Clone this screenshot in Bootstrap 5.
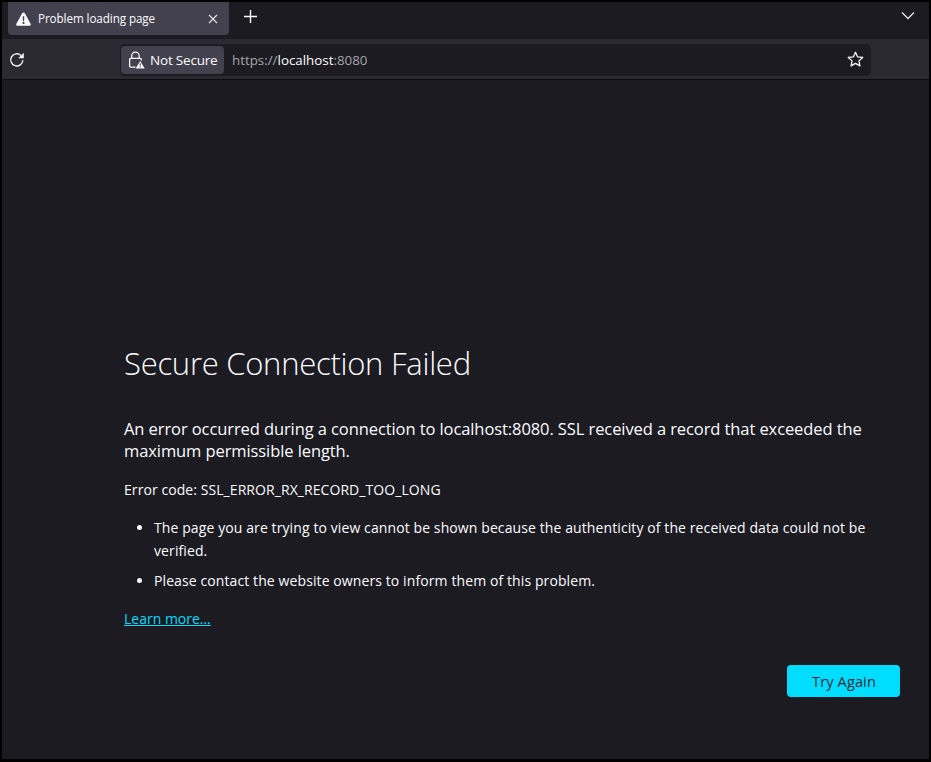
<!DOCTYPE html>
<html lang="en">
<head>
<meta charset="utf-8">
<title>Problem loading page</title>
<link rel="stylesheet" href="https://cdn.jsdelivr.net/npm/bootstrap@5.3.0/dist/css/bootstrap.min.css">
<style>
html,body{height:100%;margin:0;background:#1c1b22}
body{font-family:"Open Sans","Noto Sans",sans-serif;color:#fbfbfe}
.shell{height:762px;border:2px solid #000;border-bottom-width:3px;background:#1c1b22;overflow:hidden}
.tabbar{height:37px;background:#1c1b22;padding-left:6px}
.tabitem{width:221px;height:33px;background:#42414d;border-radius:0 0 4px 4px;padding:0 11px 0 8px;font-size:11.7px;letter-spacing:-.1px}
.tabtitle{margin-left:7px}
.plusbtn{margin-left:15px;margin-top:8px}
.chev{margin-left:auto;margin-right:14px;margin-top:9px}
.toolbar{height:41px;background:#2b2a33;border-bottom:1px solid #0c0c0f;padding-left:7px;padding-top:1px}
.urlbar{width:751px;height:32px;margin-left:95px;background:#1c1b22;border-radius:5px;padding:1px 7px 1px 1px}
.secure{height:28px;width:103px;background:#42414d;border-radius:4px;padding-left:7px;font-size:13.5px;letter-spacing:-.2px;gap:5px}
.securelabel{padding-top:1px}
.urltext{margin-left:8px;padding-top:1px;font-size:13.35px;color:#a5a4ab}
.urltext b{font-weight:400;color:#fbfbfe}
.errbody{padding:263px 29px 0 122px}
.errtitle{font-family:"Open Sans",sans-serif;font-weight:300;font-size:31px;line-height:40px;letter-spacing:-.27px;margin:0 0 35px}
.errsummary{font-size:16.5px;line-height:22px;letter-spacing:-.09px;margin:0 0 18px;width:760px}
.errcode{font-size:14px;line-height:20px;letter-spacing:.07px;margin:0 0 17px}
.errlist{font-size:14px;line-height:22.5px;letter-spacing:.1px;margin:0 0 13px;padding-left:30px}
.errlist li{margin-bottom:8px}
.learn{font-size:14px;line-height:20px;color:#00ddff;display:inline-block}
.learn:hover{color:#00ddff}
.btnrow{margin-top:35px}
.tryagain{width:113px;height:32px;padding:0 0 0 1px;background:#00ddff;border:0;border-radius:4px;color:#2b2a33;font-size:14.6px;line-height:32px;letter-spacing:.1px;font-weight:500}
.tryagain:hover{background:#00ddff;color:#2b2a33}
</style>
</head>
<body>
<div class="shell d-flex flex-column">
  <div class="tabbar d-flex align-items-start">
    <div class="tabitem d-flex align-items-center">
      <svg width="15" height="14" viewBox="0 0 15 14"><path fill="#fbfbfe" fill-rule="evenodd" d="M7.500.4c.5 0 .9.3 1.200.7l5.900 10.600c.5 1-.1 2-1.200 2H1.600c-1.100 0-1.700-1-1.200-2L6.300 1.100C6.600.7 7 .4 7.500.4zM6.700 4.200l.2 4.800h1.200l.2-4.800zM7.500 9.800a1.100 1.100 0 1 0 0 2.200 1.100 1.100 0 0 0 0-2.200z"/></svg>
      <span class="tabtitle">Problem loading page</span>
      <svg class="ms-auto" width="10" height="10" viewBox="0 0 10 10"><path stroke="#e4e4e8" stroke-width="1.100" d="M1 1l8 8M9 1l-8 8"/></svg>
    </div>
    <svg class="plusbtn" width="13" height="13" viewBox="0 0 13 13"><path stroke="#fbfbfe" stroke-width="1.400" d="M6.500 0v13M0 6.500h13"/></svg>
    <svg class="chev" width="14" height="9" viewBox="0 0 14 9"><path fill="none" stroke="#e4e4e8" stroke-width="1.300" d="M1 1.500l6 6 6-6"/></svg>
  </div>
  <div class="toolbar d-flex align-items-center">
    <svg width="16" height="16" viewBox="0 0 15 15"><path fill="none" stroke="#fbfbfe" stroke-width="1.300" d="M13 7.800A5.700 5.700 0 1 1 11.200 3.200"/><path fill="#fbfbfe" d="M13.800.8v5h-5z"/></svg>
    <div class="urlbar d-flex align-items-center">
      <div class="secure d-flex align-items-center">
        <svg width="17" height="18" viewBox="0 0 16 17"><path fill="none" stroke="#fbfbfe" stroke-width="1.200" d="M3.500 7V4.500a3.500 3.500 0 0 1 7 0V7M7 15.300H2.500a1 1 0 0 1-1-1V8a1 1 0 0 1 1-1h9a1 1 0 0 1 1 1v1"/><path fill="#fbfbfe" d="M11.500 9.500l4.300 7H7.200z"/><path stroke="#42414d" d="M11.500 11.500v2.500M11.500 14.700v1"/></svg>
        <span class="securelabel">Not Secure</span>
      </div>
      <span class="urltext">https://<b>localhost</b>:8080</span>
      <svg class="ms-auto" width="17" height="17" viewBox="0 0 16 16"><path fill="none" stroke="#fbfbfe" stroke-width="1.200" stroke-linejoin="round" d="M8 1.200l2 4.400 4.800.5-3.600 3.200 1 4.700L8 11.600 3.800 14l1-4.700L1.200 6.100 6 5.600z"/></svg>
    </div>
  </div>
  <main class="errbody">
    <h1 class="errtitle">Secure Connection Failed</h1>
    <p class="errsummary">An error occurred during a connection to localhost:8080. SSL received a record that exceeded the maximum permissible length.</p>
    <p class="errcode">Error code: SSL_ERROR_RX_RECORD_TOO_LONG</p>
    <ul class="errlist">
      <li>The page you are trying to view cannot be shown because the authenticity of the received data could not be verified.</li>
      <li>Please contact the website owners to inform them of this problem.</li>
    </ul>
    <a class="learn" href="#">Learn more…</a>
    <div class="btnrow d-flex justify-content-end">
      <button type="button" class="btn tryagain">Try Again</button>
    </div>
  </main>
</div>
<script src="https://cdn.jsdelivr.net/npm/bootstrap@5.3.0/dist/js/bootstrap.bundle.min.js"></script>
</body>
</html>
